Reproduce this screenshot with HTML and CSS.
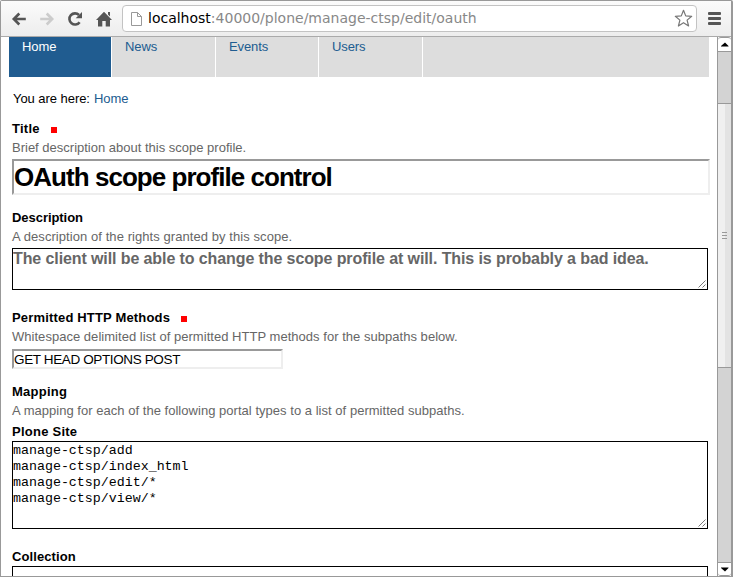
FILE: index.html
```html
<!DOCTYPE html>
<html lang="en">
<head>
<meta charset="utf-8">
<title>OAuth scope profile control</title>
<link rel="stylesheet" href="styles.css">
</head>
<body>
<div class="window">
  <header class="toolbar">
    <svg class="ico back" width="16" height="16" viewBox="0 0 16 16"><path d="M14.800 8H3M8.300 2.500 2.800 8l5.500 5.500"/></svg>
    <svg class="ico forward" width="16" height="16" viewBox="0 0 16 16"><path d="M1.200 8H13M7.700 2.500 13.200 8l-5.500 5.500"/></svg>
    <svg class="ico reload" width="16" height="16" viewBox="0 0 16 16"><path d="M12.600 11.200A5.600 5.600 0 1 1 12 4"/><path class="solid" d="M15 1v6.300H8.700z"/></svg>
    <svg class="ico home" width="16" height="16" viewBox="0 0 16 16"><path class="solid" d="M8 .8 16 9h-2v6.500H9.700V10H6.300v5.500H2V9H0L8 .8zM12 1h2v4.500l-2-2z"/></svg>
    <div class="address">
      <svg class="page" width="13" height="16" viewBox="0 0 13 16"><path d="M1.500 1.500h6L11.500 5.500v9h-10zM7.500 1.500v4h4"/></svg>
      <span class="url"><b>localhost</b>:40000/plone/manage-ctsp/edit/oauth</span>
      <svg class="star" width="19" height="19" viewBox="0 0 19 19"><path d="m9.500 1.300 2.200 5.600 6 .4-4.600 3.800 1.500 5.900-5.100-3.300L4.400 17l1.500-5.900L1.300 7.300l6-.4z"/></svg>
    </div>
    <div class="menu"><i></i><i></i><i></i></div>
  </header>
  <div class="view">
    <main class="page-body">
      <nav class="tabs">
        <a class="tab selected"><span>Home</span></a><a class="tab">News</a><a class="tab">Events</a><a class="tab">Users</a><span class="rest"></span>
      </nav>
      <div class="crumbs"><span class="here">You are here:</span><a>Home</a></div>
      <section class="field">
        <div class="label"><span class="l1">Title</span><i class="required"></i></div>
        <div class="help h1">Brief description about this scope profile.</div>
        <div class="input title"><span>OAuth scope profile control</span></div>
      </section>
      <section class="field">
        <div class="label"><span class="l2">Description</span></div>
        <div class="help h2">A description of the rights granted by this scope.</div>
        <div class="area summary"><span>The client will be able to change the scope profile at will. This is probably a bad idea.</span><svg class="grip" width="8" height="8" viewBox="0 0 8 8"><path d="M.5 7.500l7-7M4.500 7.500l3-3"/></svg></div>
      </section>
      <section class="field after-area">
        <div class="label"><span class="l3">Permitted HTTP Methods</span><i class="required"></i></div>
        <div class="help h3">Whitespace delimited list of permitted HTTP methods for the subpaths below.</div>
        <div class="input methods"><span>GET HEAD OPTIONS POST</span></div>
      </section>
      <section class="field">
        <div class="label"><span class="l4">Mapping</span></div>
        <div class="help h4">A mapping for each of the following portal types to a list of permitted subpaths.</div>
        <div class="label sub"><span class="l5">Plone Site</span></div>
        <div class="area paths"><pre>manage-ctsp/add
manage-ctsp/index_html
manage-ctsp/edit/*
manage-ctsp/view/*</pre><svg class="grip" width="8" height="8" viewBox="0 0 8 8"><path d="M.5 7.500l7-7M4.500 7.500l3-3"/></svg></div>
      </section>
      <section class="field after-area">
        <div class="label"><span class="l6">Collection</span></div>
        <div class="area paths"></div>
      </section>
    </main>
    <aside class="scrollbar">
      <div class="arrow up"><svg width="8" height="5" viewBox="0 0 8 5"><path d="M0 4.500h7.500V4L4 .5 0 4z"/></svg></div>
      <div class="track above"></div>
      <div class="thumb"><i></i><i></i><i></i></div>
      <div class="track below"></div>
      <div class="arrow down"><svg width="8" height="5" viewBox="0 0 8 5"><path d="M0 .5h7.500V1L4 4.500 0 1z"/></svg></div>
    </aside>
  </div>
</div>
</body>
</html>
```
FILE: styles.css
```css
* { box-sizing: border-box; }
body { margin: 0; background: #fff; overflow: hidden; font-family: "Liberation Sans", Arial, sans-serif; }
.window { width: 733px; height: 577px; border: 1px solid #999; border-right: 2px solid #999; display: flex; flex-direction: column; overflow: hidden; border-radius: 2px 2px 0 0; }
.toolbar { flex: none; height: 36px; display: flex; align-items: center; background: linear-gradient(#fbfbfb, #ededed); border-bottom: 1px solid #aaa; padding-left: 10px; }
.ico { flex: none; margin-right: 12px; fill: none; stroke: #555; stroke-width: 2.600; }
.forward { stroke: #ccc; }
.solid { fill: #555; stroke: none; }
.home { margin: 0 10px 0 1px; }
.address { width: 575px; height: 27px; border: 1px solid #c3c3c3; border-radius: 4px; background: #fff; display: flex; align-items: center; padding: 0 3px 0 7px; }
.page { fill: #fff; stroke: #999; margin-right: 5px; }
.url { font: 14px "DejaVu Sans", sans-serif; color: #888; white-space: nowrap; margin-top: -2px; }
.url b { font-weight: 400; color: #000; }
.star { margin-left: auto; fill: #fff; stroke: #777; stroke-width: 1.200; stroke-linejoin: round; }
.menu { margin-left: 11px; display: grid; gap: 2px; }
.menu i { width: 13px; height: 3px; background: #555; border-radius: 1px; }
.view { flex: 1; min-height: 0; display: flex; justify-content: space-between; }
.page-body { width: 710px; overflow: hidden; padding-left: 8px; white-space: nowrap; font-size: 13px; }
.tabs { width: 700px; height: 40px; display: flex; gap: 1px; }
.tab, .rest { background: #ddd; }
.tab { flex: none; width: 103px; padding: 1px 0 0 13px; line-height: 18px; color: #205c90; letter-spacing: -.1px; }
.tab.selected { width: 102px; background: #205c90; color: #fff; }
.tab:nth-child(3) { width: 102px; }
.rest { flex: 1; }
.crumbs { height: 18px; margin: 13px 0 12px 4px; line-height: 18px; display: flex; gap: 4px; letter-spacing: -.05px; }
.crumbs a { color: #205c90; }
.field { margin: 0 0 14px 3px; }
.after-area { margin-top: 19px; }
.label { height: 18px; line-height: 18px; font-weight: 700; display: flex; align-items: center; color: #000; letter-spacing: .25px; }
.l2 { letter-spacing: -.05px; }
.l3 { letter-spacing: .17px; }
.l6 { letter-spacing: .1px; }
.required { width: 6px; height: 6px; background: #f00; margin: 1px 0 0 11px; }
.sub { margin-top: 2px; }
.help { height: 20px; line-height: 20px; color: #666; letter-spacing: .03px; }
.h1 { letter-spacing: 0; }
.h2 { letter-spacing: .07px; }
.input { border: 2px solid; border-color: #999 #eee #eee #999; color: #000; }
.title { width: 698px; height: 36px; margin-top: 1px; font-size: 26px; font-weight: 700; line-height: 32px; letter-spacing: -.960px; }
.methods { width: 271px; height: 20px; margin-top: 2px; font-size: 13.500px; line-height: 17px; letter-spacing: -.370px; }
.area { width: 696px; border: 1px solid #000; position: relative; }
.summary { height: 42px; margin-top: 1px; font-size: 16px; font-weight: 700; line-height: 19px; color: #666; letter-spacing: -.1px; }
.paths { height: 88px; }
.paths pre { margin: 0; padding-top: 1px; font: 13.300px/16px "Liberation Mono", monospace; color: #000; }
.grip { position: absolute; right: 1px; bottom: 1px; fill: none; stroke: #555; stroke-width: .8; }
.scrollbar { width: 14px; display: flex; flex-direction: column; border-left: 1px solid #999; }
.arrow { height: 14px; background: #fff; display: flex; align-items: center; justify-content: center; border: 1px solid #999; border-width: 1px 0; }
.up { height: 15px; border-radius: 3px 3px 0 0; }
.down { border-radius: 0 0 3px 3px; }
.track { background: #d3d3d3; }
.above { height: 51px; }
.below { flex: 1; }
.thumb { height: 265px; border: 1px solid #999; border-width: 1px 0; background: linear-gradient(90deg, #f0f0f0 54%, #e3e3e3 54%); display: flex; flex-direction: column; align-items: center; justify-content: center; gap: 2px; }
.thumb i { width: 5px; height: 1px; background: #999; }
```
